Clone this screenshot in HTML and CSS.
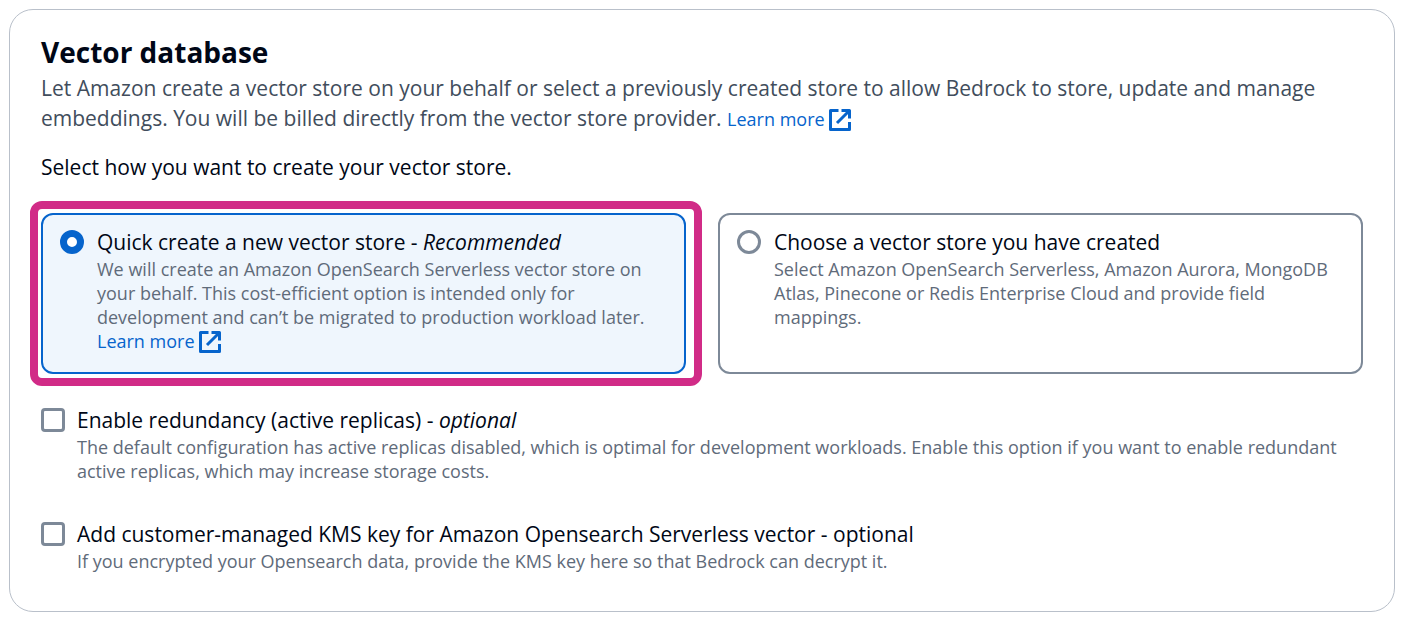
FILE: index.html
```html
<!DOCTYPE html>
<html lang="en">
<head>
<meta charset="utf-8">
<meta name="viewport" content="width=device-width, initial-scale=1">
<title>Vector database</title>
<link rel="stylesheet" href="styles.css">
</head>
<body>
<svg class="sprite" aria-hidden="true">
  <symbol id="external" viewBox="0 0 22 22">
    <path d="M9.500 1.500H1.500v19h19v-7.500M12.500 1.500h8v8M20.500 1.500L8 14" fill="none" stroke="currentColor" stroke-width="3" stroke-linejoin="round"/>
  </symbol>
</svg>
<main class="panel">
  <header class="intro">
    <h1 class="title">Vector database</h1>
    <p class="lead">Let Amazon create a vector store on your behalf or select a previously created store to allow Bedrock to store, update and manage embeddings. You will be billed directly from the vector store provider. <a class="link" href="#">Learn more <svg class="icon" aria-hidden="true"><use href="#external"/></svg></a></p>
  </header>
  <fieldset class="stores">
    <legend class="question">Select how you want to create your vector store.</legend>
    <div class="tiles">
      <div class="tile tile-selected">
        <input class="control radio" type="radio" name="store" id="quick" aria-describedby="quick-hint" checked>
        <div class="text">
          <label class="label" for="quick">Quick create a new vector store - <em>Recommended</em></label>
          <p class="hint" id="quick-hint">We will create an Amazon OpenSearch Serverless vector store on your behalf. This cost-efficient option is intended only for development and can’t be migrated to production workload later. <a class="link" href="#">Learn more <svg class="icon" aria-hidden="true"><use href="#external"/></svg></a></p>
        </div>
      </div>
      <div class="tile">
        <input class="control radio" type="radio" name="store" id="existing" aria-describedby="existing-hint">
        <div class="text">
          <label class="label" for="existing">Choose a vector store you have created</label>
          <p class="hint" id="existing-hint">Select Amazon OpenSearch Serverless, Amazon Aurora, MongoDB Atlas, Pinecone or Redis Enterprise Cloud and provide field mappings.</p>
        </div>
      </div>
    </div>
  </fieldset>
  <div class="options">
    <div class="option">
      <input class="control checkbox" type="checkbox" id="redundancy" aria-describedby="redundancy-hint">
      <div class="text">
        <label class="label" for="redundancy">Enable redundancy (active replicas) - <em>optional</em></label>
        <p class="hint" id="redundancy-hint">The default configuration has active replicas disabled, which is optimal for development workloads. Enable this option if you want to enable redundant active replicas, which may increase storage costs.</p>
      </div>
    </div>
    <div class="option">
      <input class="control checkbox" type="checkbox" id="kms" aria-describedby="kms-hint">
      <div class="text">
        <label class="label" for="kms">Add customer-managed KMS key for Amazon Opensearch Serverless vector - optional</label>
        <p class="hint" id="kms-hint">If you encrypted your Opensearch data, provide the KMS key here so that Bedrock can decrypt it.</p>
      </div>
    </div>
  </div>
</main>
</body>
</html>
```
FILE: styles.css
```css
* {
  box-sizing: border-box;
}

body {
  margin: 0;
  padding: 9px 8px 9px 9px;
  background: #fff;
  color: #000716;
  font-family: "Open Sans", "Noto Sans", sans-serif;
  font-size: 21px;
  line-height: 28px;
}

.sprite {
  display: none;
}

.panel {
  padding: 23px 31px 38px;
  border: 1px solid #b9c0ca;
  border-radius: 24px;
}

.title {
  margin: 0;
  font-size: 28px;
  line-height: 38px;
}

.lead {
  margin: 2px 0 0;
  color: #414d5c;
  line-height: 30px;
}

.link {
  color: #0664cc;
  font-size: 18px;
  line-height: 24px;
  text-decoration: none;
  white-space: nowrap;
}

.icon {
  width: 22px;
  height: 22px;
  vertical-align: -5px;
}

.stores {
  margin: 20px 0 0;
  padding: 0;
  border: 0;
  min-width: 0;
}

.question {
  padding: 0;
}

.tiles {
  display: grid;
  grid-template-columns: 1fr 1fr;
  gap: 32px;
  margin-top: 32px;
}

.tile {
  display: flex;
  gap: 13px;
  padding: 13px 18px 19px 17px;
  border: 2px solid #7d8998;
  border-radius: 12px;
}

.tile-selected {
  position: relative;
  border-color: #0664cc;
  background: #eff6fd;
}

/* Highlight frame around the chosen tile */
.tile-selected::after {
  content: "";
  position: absolute;
  inset: -14px -18px -14px -13px;
  border: 8px solid #d12b87;
  border-radius: 12px;
  pointer-events: none;
}

.text {
  flex: 1;
  min-width: 0;
}

.label {
  display: block;
}

.hint {
  margin: 1px 0 0;
  color: #5f6b7a;
  font-size: 18px;
  line-height: 24px;
}

.control {
  appearance: none;
  flex: none;
  width: 24px;
  height: 24px;
  margin: 2px 0 0;
  border: 3px solid #7d8998;
  background: #fff;
}

.radio {
  border-radius: 50%;
}

.radio:checked {
  border: 7px solid #0664cc;
}

.checkbox {
  border-radius: 4px;
}

.options {
  display: grid;
  gap: 37px;
  margin-top: 32px;
}

.option {
  display: flex;
  gap: 12px;
}
```
